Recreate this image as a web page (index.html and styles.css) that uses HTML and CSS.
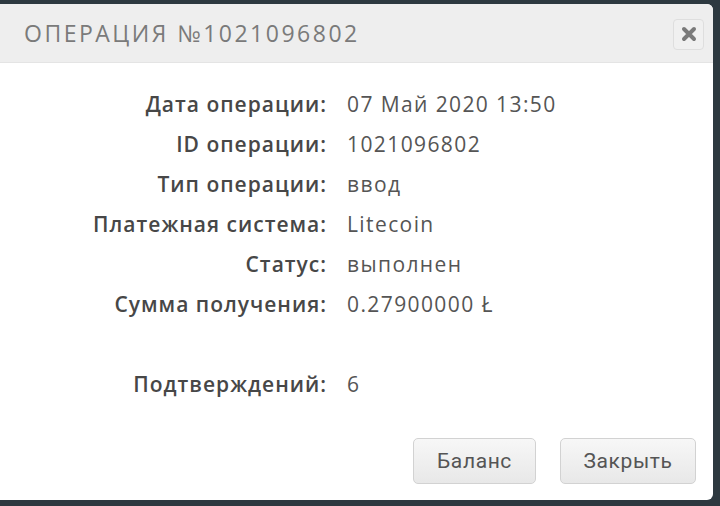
FILE: index.html
```html
<!DOCTYPE html>
<html lang="ru">
<head>
  <meta charset="UTF-8" />
  <meta name="viewport" content="width=device-width, initial-scale=1.0"/>
  <title>Операция №1021096802</title>
  <link rel="stylesheet" href="styles.css">
</head>
<body>

  <div class="modal">
    <div class="modal-header">
      <h2>Операция №1021096802</h2>
      <button class="close-btn" title="Закрыть">
        <svg width="16" height="16" viewBox="0 0 16 16">
          <path d="M3 3 L13 13 M13 3 L3 13" stroke="#7a7a7a" stroke-width="4" stroke-linecap="round"/>
        </svg>
      </button>
    </div>

    <div class="modal-body">
      <div class="info">
        <div class="label">Дата операции:</div>
        <div class="value">07 Май 2020 13:50</div>

        <div class="label">ID операции:</div>
        <div class="value">1021096802</div>

        <div class="label">Тип операции:</div>
        <div class="value">ввод</div>

        <div class="label">Платежная система:</div>
        <div class="value">Litecoin</div>

        <div class="label">Статус:</div>
        <div class="value">выполнен</div>

        <div class="label">Сумма получения:</div>
        <div class="value">0.27900000 Ł</div>

        <div class="spacer"></div>

        <div class="label">Подтверждений:</div>
        <div class="value">6</div>
      </div>
    </div>

    <div class="modal-footer">
      <button class="btn">Баланс</button>
      <button class="btn">Закрыть</button>
    </div>
  </div>

</body>
</html>
```

FILE: styles.css
```css
body {
  margin: 0;
  background-color: #2d3940;
  font-family: "Open Sans", "Noto Sans", sans-serif;
  height: 506px;
  overflow: hidden;
}

.modal {
  width: 713px;
  height: 496px;
  margin-top: 4px;
  background: #fff;
  border-radius: 0 6px 6px 0;
  display: flex;
  flex-direction: column;
  overflow: hidden;
}

.modal-header {
  height: 59px;
  background: #eeeeee;
  border-bottom: 1px solid #e4e4e4;
  box-sizing: border-box;
  display: flex;
  align-items: center;
  justify-content: space-between;
  padding: 0 9px 0 24px;
}

.modal-header h2 {
  margin: 0;
  font-size: 23px;
  font-weight: 400;
  letter-spacing: 2.5px;
  text-transform: uppercase;
  color: #7a7a7a;
}

.close-btn {
  width: 31px;
  height: 31px;
  margin-top: 2px;
  border: 1px solid #dedede;
  border-radius: 4px;
  background: #f0f0f0;
  display: flex;
  align-items: center;
  justify-content: center;
  padding: 0;
  cursor: pointer;
}

.modal-body {
  padding-top: 21px;
}

.info {
  display: grid;
  grid-template-columns: 327px 1fr;
  column-gap: 20px;
  font-size: 21px;
  line-height: 40px;
  letter-spacing: 1.4px;
}

.label {
  text-align: right;
  color: #474747;
  font-weight: 600;
  letter-spacing: 1px;
}

.value {
  color: #555;
  font-weight: 400;
}

.spacer {
  grid-column: 1 / 3;
  height: 40px;
}

.modal-footer {
  display: flex;
  justify-content: flex-end;
  gap: 24px;
  padding: 34px 17px 0 0;
}

.btn {
  height: 46px;
  padding: 0;
  font-family: Roboto, "Noto Sans", sans-serif;
  font-size: 21px;
  letter-spacing: 0.6px;
  color: #555;
  background: linear-gradient(#f7f7f7, #e8e8e8);
  border: 1px solid #d2d2d2;
  border-radius: 5px;
  cursor: pointer;
}

.btn:first-child {
  width: 123px;
}

.btn:last-child {
  width: 136px;
}
```
